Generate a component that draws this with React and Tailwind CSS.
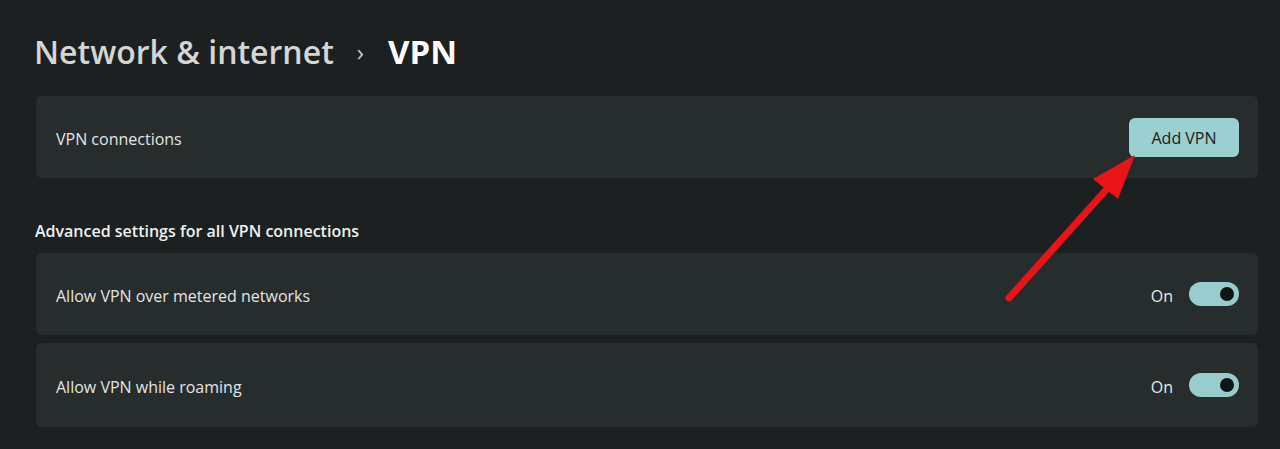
import React from 'react';

const font = { fontFamily: '"Open Sans", "Noto Sans", sans-serif' };

// Simple on-state toggle, Windows 11 style
const Toggle = () => (
  <div className="flex items-center gap-4">
    <span className="pt-[4px] text-[16px] text-[#e6e8e8]">On</span>
    <div className="flex h-[24px] w-[50px] items-center justify-end rounded-full bg-[#99cccc] pr-[5px]">
      <div className="h-[14px] w-[14px] rounded-full bg-[#0f1414]"></div>
    </div>
  </div>
);

const Row = ({ label, children, className = '' }) => (
  <div className={`flex items-center justify-between rounded-md bg-[#272c2d] pl-5 pr-[19px] ${className}`}>
    <span className="pt-[4px] text-[16px] text-[#e3e5e5]">{label}</span>
    {children}
  </div>
);

export default function App() {
  return (
    <div className="relative h-[449px] w-[1280px] overflow-hidden bg-[#1c2021]" style={font}>
      {/* Breadcrumb title */}
      <div className="flex items-center pl-[34px] pt-[28px]">
        <span className="text-[32px] font-semibold leading-[48px] text-[#d4d6d6]">Network &amp; internet</span>
        <span className="ml-[23px] mr-[24px] text-[24px] text-[#c9cbcb]">›</span>
        <span className="text-[33px] font-bold leading-[48px] text-white">VPN</span>
      </div>

      <div className="ml-[36px] mr-[22px] mt-[20px]">
        <Row label="VPN connections" className="h-[82px]">
          <button className="h-[39px] w-[110px] rounded-md bg-[#9ccfcf] pt-[2px] text-[16px] text-[#1a2020]">Add VPN</button>
        </Row>

        <div className="mb-[10px] ml-[-1px] mt-[41px] text-[16px] font-semibold text-[#eef0f0]">
          Advanced settings for all VPN connections
        </div>

        <div className="flex flex-col gap-[8px]">
          <Row label="Allow VPN over metered networks" className="h-[82px]">
            <Toggle />
          </Row>
          <Row label="Allow VPN while roaming" className="h-[84px]">
            <Toggle />
          </Row>
        </div>
      </div>

      {/* Red annotation arrow */}
      <svg className="pointer-events-none absolute left-0 top-0" width="1280" height="449">
        <line x1="1009" y1="298" x2="1106" y2="190" stroke="#e8141a" strokeWidth="7" strokeLinecap="round" />
        <polygon points="1135,155 1093,179 1118,199" fill="#e8141a" />
      </svg>
    </div>
  );
}
